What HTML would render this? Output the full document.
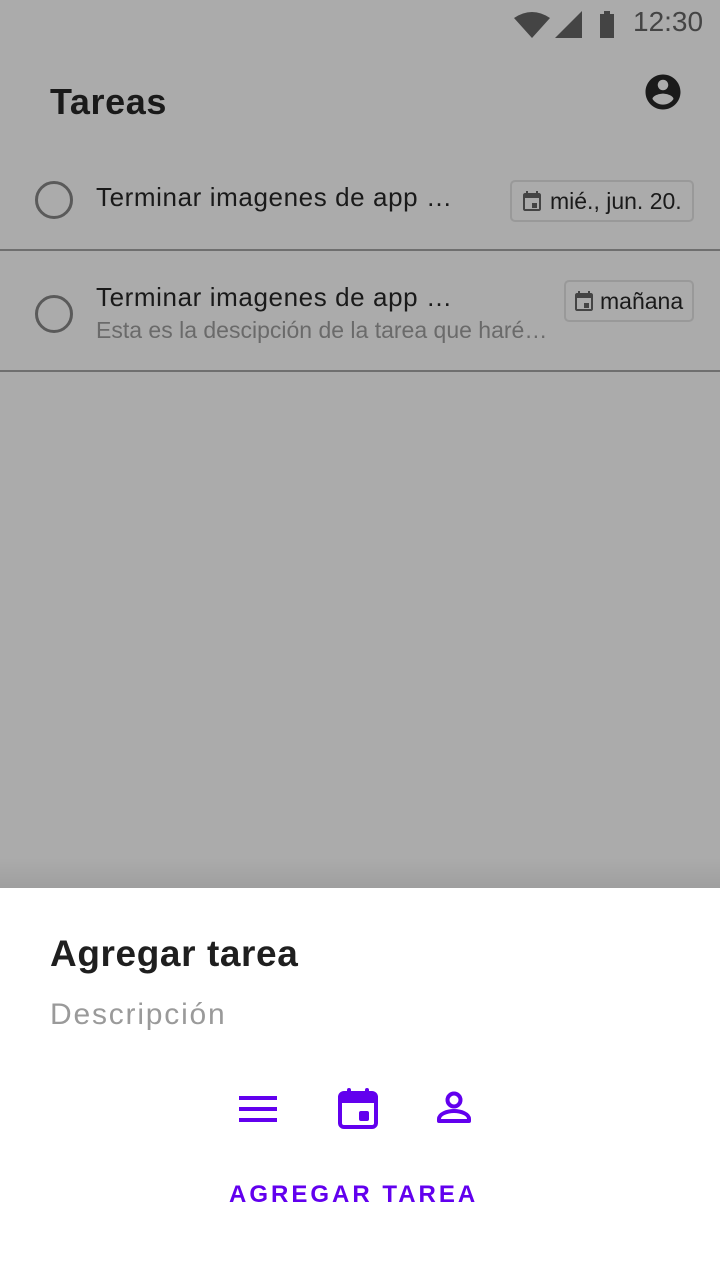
<!DOCTYPE html>
<html><head><meta charset="utf-8"><style>
*{margin:0;padding:0;box-sizing:border-box}
body{width:720px;height:1280px;overflow:hidden;background:#ababab;font-family:"Liberation Sans",Roboto,sans-serif;position:relative;color:#1a1a1a}
.abs{position:absolute}
.t{white-space:nowrap}
.div{position:absolute;left:0;width:720px;height:2px;background:#6f6f6f}
.circ{position:absolute;width:38px;height:38px;border:3px solid #5a5a5a;border-radius:50%}
.chip{position:absolute;border:2px solid #999;border-radius:5px;height:42px;font-size:23px;display:flex;align-items:center;padding-left:8px;color:#1a1a1a}
</style></head><body>
<svg class="abs" style="left:512px;top:8px" width="125" height="32" viewBox="0 0 125 32">
<path d="M2 10 Q20 -2 38 10 L20 30 Z" fill="#444"/>
<path d="M70 3 L70 30 L43 30 Z" fill="#444"/>
<rect x="88" y="6" width="14" height="24" fill="#444"/><rect x="92" y="3" width="6" height="4" fill="#444"/>
</svg>
<div class="abs t" style="left:633px;top:6px;font-size:28px;color:#444">12:30</div>
<div class="abs t" style="left:50px;top:81px;font-size:36px;font-weight:bold;letter-spacing:0.6px;color:#1a1a1a">Tareas</div>
<svg class="abs" style="left:642px;top:71px" width="42" height="42" viewBox="0 0 24 24"><path fill="#1a1a1a" d="M12 2C6.48 2 2 6.48 2 12s4.48 10 10 10 10-4.48 10-10S17.52 2 12 2zm0 3c1.66 0 3 1.34 3 3s-1.34 3-3 3-3-1.34-3-3 1.34-3 3-3zm0 14.2c-2.5 0-4.71-1.28-6-3.22.03-1.99 4-3.08 6-3.08 1.99 0 5.97 1.09 6 3.08-1.29 1.94-3.5 3.22-6 3.22z"/></svg>

<div class="circ" style="left:35px;top:181px"></div>
<div class="abs t" style="left:96px;top:182px;font-size:26px;letter-spacing:0.6px">Terminar imagenes de app …</div>
<div class="chip" style="left:510px;top:180px;width:184px">
<svg width="24" height="24" viewBox="0 0 24 24"><path fill="#444" d="M19 4h-1V2h-2v2H8V2H6v2H5c-1.1 0-2 .9-2 2v14c0 1.1.9 2 2 2h14c1.1 0 2-.9 2-2V6c0-1.1-.9-2-2-2zm0 16H5V9h14v11zM12 14h5v5h-5z"/></svg><span style="margin-left:6px">mié., jun. 20.</span></div>
<div class="div" style="top:249px"></div>

<div class="circ" style="left:35px;top:295px"></div>
<div class="abs t" style="left:96px;top:282px;font-size:26px;letter-spacing:0.6px">Terminar imagenes de app …</div>
<div class="abs t" style="left:96px;top:317px;font-size:23px;color:#6a6a6a">Esta es la descipción de la tarea que haré…</div>
<div class="chip" style="left:564px;top:280px;width:130px;padding-left:6px">
<svg width="24" height="24" viewBox="0 0 24 24"><path fill="#444" d="M19 4h-1V2h-2v2H8V2H6v2H5c-1.1 0-2 .9-2 2v14c0 1.1.9 2 2 2h14c1.1 0 2-.9 2-2V6c0-1.1-.9-2-2-2zm0 16H5V9h14v11zM12 14h5v5h-5z"/></svg><span style="margin-left:4px">mañana</span></div>
<div class="div" style="top:370px"></div>

<div class="abs" style="left:0;top:858px;width:720px;height:30px;background:linear-gradient(to bottom,rgba(0,0,0,0),rgba(0,0,0,0.07))"></div>
<div class="abs" style="left:0;top:888px;width:720px;height:392px;background:#fff"></div>
<div class="abs t" style="left:50px;top:933px;font-size:37px;font-weight:bold;letter-spacing:0.6px;color:#1f1f1f">Agregar tarea</div>
<div class="abs t" style="left:50px;top:998px;font-size:30px;letter-spacing:1.8px;color:#9a9a9a">Descripción</div>
<svg class="abs" style="left:238px;top:1095px" width="40" height="28" viewBox="0 0 40 28"><rect x="1" y="1" width="38" height="4" fill="#6200ee"/><rect x="1" y="12" width="38" height="4" fill="#6200ee"/><rect x="1" y="23" width="38" height="4" fill="#6200ee"/></svg>
<svg class="abs" style="left:338px;top:1087px" width="40" height="42" viewBox="0 0 40 42"><rect x="2" y="6" width="36" height="34" rx="4" fill="none" stroke="#6200ee" stroke-width="4"/><rect x="2" y="6" width="36" height="10" fill="#6200ee"/><rect x="9" y="1" width="4" height="8" rx="2" fill="#6200ee"/><rect x="27" y="1" width="4" height="8" rx="2" fill="#6200ee"/><rect x="21" y="24" width="10" height="10" rx="2" fill="#6200ee"/></svg>
<svg class="abs" style="left:436px;top:1090px" width="36" height="36" viewBox="0 0 36 36"><circle cx="18" cy="10" r="6.5" fill="none" stroke="#6200ee" stroke-width="4"/><path d="M3 31 L33 31 L33 29 C33 24 25 21 18 21 C11 21 3 24 3 29 Z" fill="none" stroke="#6200ee" stroke-width="4" stroke-linejoin="round"/></svg>
<div class="abs t" style="left:229px;top:1181px;font-size:24px;font-weight:bold;letter-spacing:3px;color:#6200ee">AGREGAR TAREA</div>
</body></html>
